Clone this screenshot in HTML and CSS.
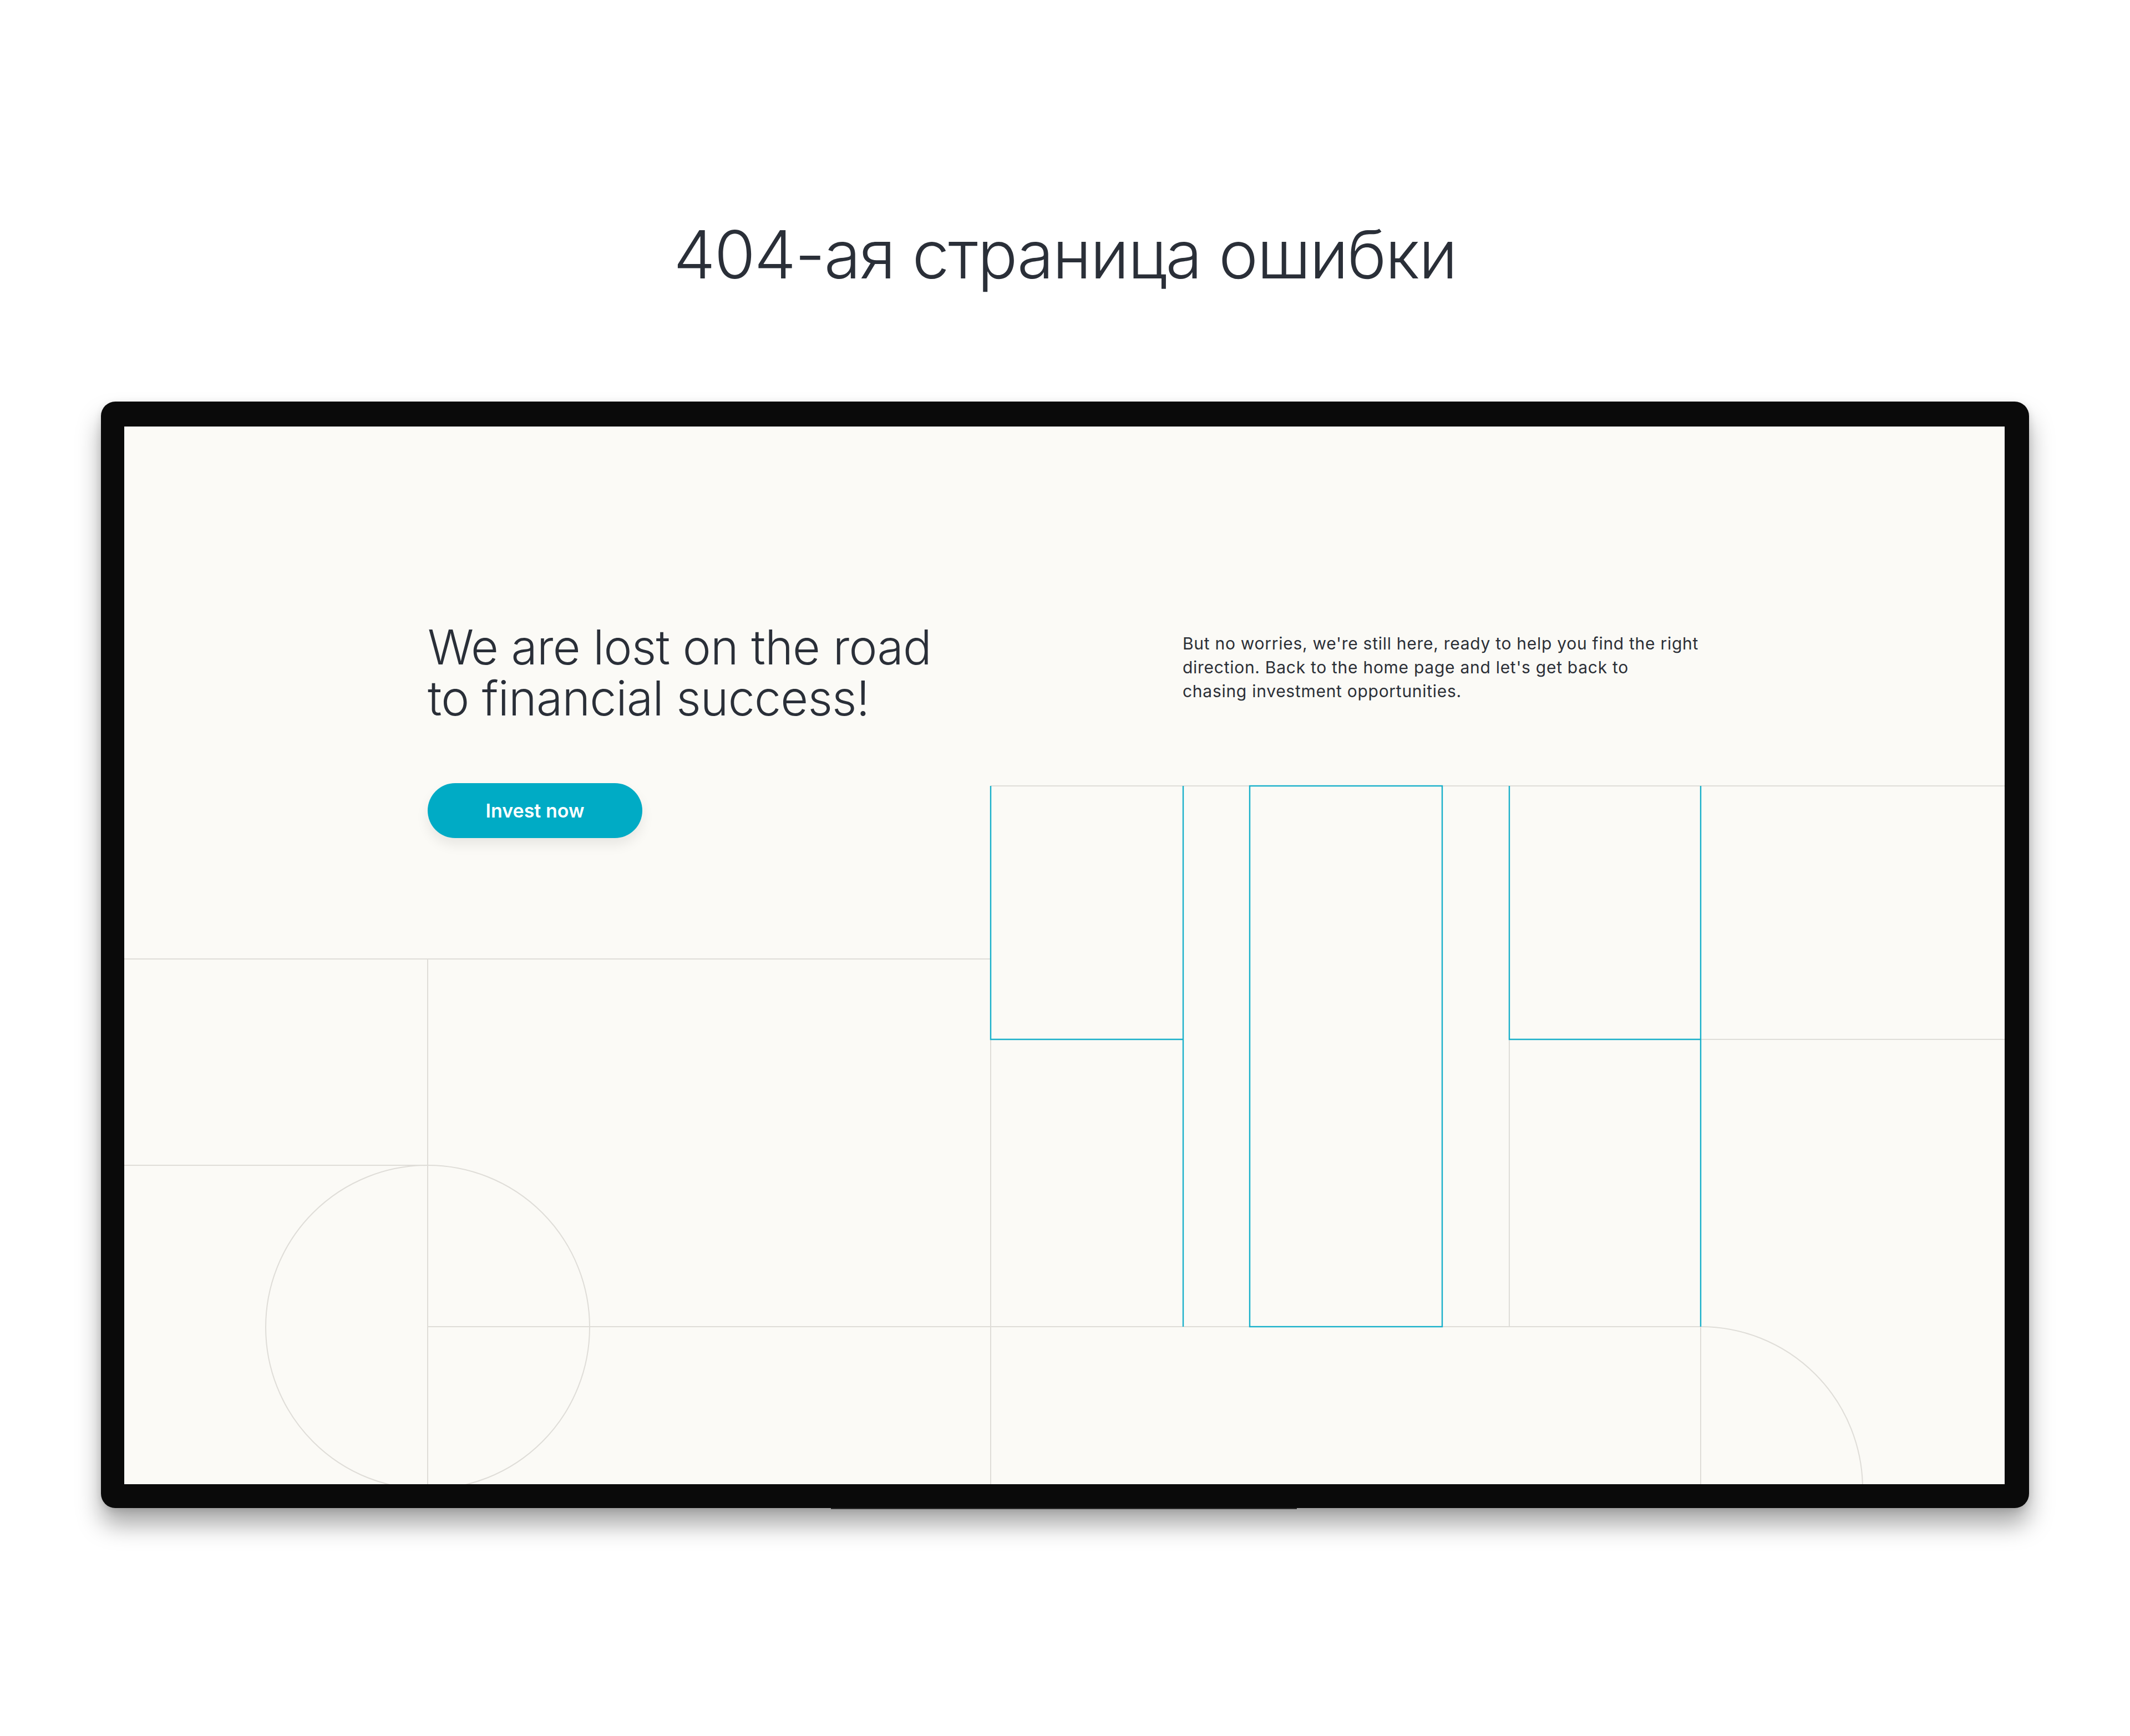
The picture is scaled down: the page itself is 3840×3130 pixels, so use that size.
FILE: index.html
```html
<!DOCTYPE html>
<html lang="ru">
<head>
  <meta charset="UTF-8">
  <title>404-ая страница ошибки</title>
  <link rel="stylesheet" href="styles.css">
</head>
<body>
  <h1 class="page-title">404-ая страница ошибки</h1>

  <div class="monitor">
    <div class="screen">
      <!-- background grid with the "404" blocks -->
      <svg class="grid" viewBox="0 0 3390 1907" preserveAspectRatio="none">
        <g class="grid-gray">
          <line x1="1562" y1="648" x2="3390" y2="648"/>
          <line x1="0" y1="960" x2="1562" y2="960"/>
          <line x1="547" y1="960" x2="547" y2="1907"/>
          <line x1="0" y1="1332" x2="547" y2="1332"/>
          <circle cx="547" cy="1624" r="292"/>
          <line x1="547" y1="1623" x2="2842" y2="1623"/>
          <line x1="1562" y1="1105" x2="1562" y2="1907"/>
          <line x1="2497" y1="1105" x2="2497" y2="1623"/>
          <line x1="2842" y1="1623" x2="2842" y2="1907"/>
          <line x1="2842" y1="1105" x2="3390" y2="1105"/>
          <path d="M2842 1623 A292 292 0 0 1 3134 1915"/>
        </g>
        <g class="grid-blue">
          <path d="M1562 648 V1105 H1909"/>
          <line x1="1909" y1="648" x2="1909" y2="1623"/>
          <rect x="2029" y="648" width="347" height="975"/>
          <path d="M2497 648 V1105 H2842"/>
          <line x1="2842" y1="648" x2="2842" y2="1623"/>
        </g>
      </svg>

      <div class="content">
        <div class="intro">
          <h2>We are lost on the road<br>to financial success!</h2>
          <button class="btn">Invest now</button>
        </div>
        <p class="note">But no worries, we're still here, ready to help you find the right direction. Back to the home page and let's get back to<br>chasing investment opportunities.</p>
      </div>
    </div>
  </div>
</body>
</html>
```

FILE: styles.css
```css
body {
  margin: 0;
  padding-bottom: 411px;
  background: #fff;
  font-family: Inter, "Noto Sans", sans-serif;
  color: #2a2f38;
}

.page-title {
  margin: 387px 0 193px;
  text-align: center;
  font-size: 120px;
  font-weight: 300;
  line-height: 144px;
  letter-spacing: -2px;
}

.monitor {
  position: relative;
  width: 3390px;
  margin: 0 auto;
  padding: 45px 44px 43px 42px;
  background: #0a0a0a;
  border-radius: 26px;
  box-shadow: 0 30px 44px rgba(0,0,0,0.34), 0 4px 14px rgba(0,0,0,0.12);
}

/* small lip under the bezel */
.monitor::after {
  content: "";
  position: absolute;
  left: 1316px;
  top: 100%;
  width: 840px;
  height: 2px;
  background: #2c2c2c;
}

.screen {
  position: relative;
  height: 1907px;
  background: #fbfaf6;
  overflow: hidden;
}

.grid {
  position: absolute;
  inset: 0;
  width: 100%;
  height: 100%;
}

.grid-gray * {
  fill: none;
  stroke: #dfddd8;
  stroke-width: 2;
}

.grid-blue * {
  fill: none;
  stroke: #19b0ca;
  stroke-width: 2.4;
}

.content {
  position: relative;
  display: grid;
  grid-template-columns: 1361px 940px;
  padding: 352px 0 0 547px;
}

.intro h2 {
  margin: 0;
  font-size: 86px;
  font-weight: 300;
  line-height: 92px;
  letter-spacing: -0.75px;
  color: #2a2f38;
}

.btn {
  margin-top: 107px;
  width: 387px;
  height: 99px;
  border: none;
  border-radius: 50px;
  background: #00abc5;
  color: #fff;
  font-family: Inter, sans-serif;
  font-size: 34px;
  font-weight: 600;
  box-shadow: 0 12px 22px rgba(0,0,0,0.08);
  cursor: pointer;
}

.note {
  margin: 18px 0 0;
  font-size: 30px;
  line-height: 43px;
  letter-spacing: 0.72px;
  color: #2b2f36;
}
```
